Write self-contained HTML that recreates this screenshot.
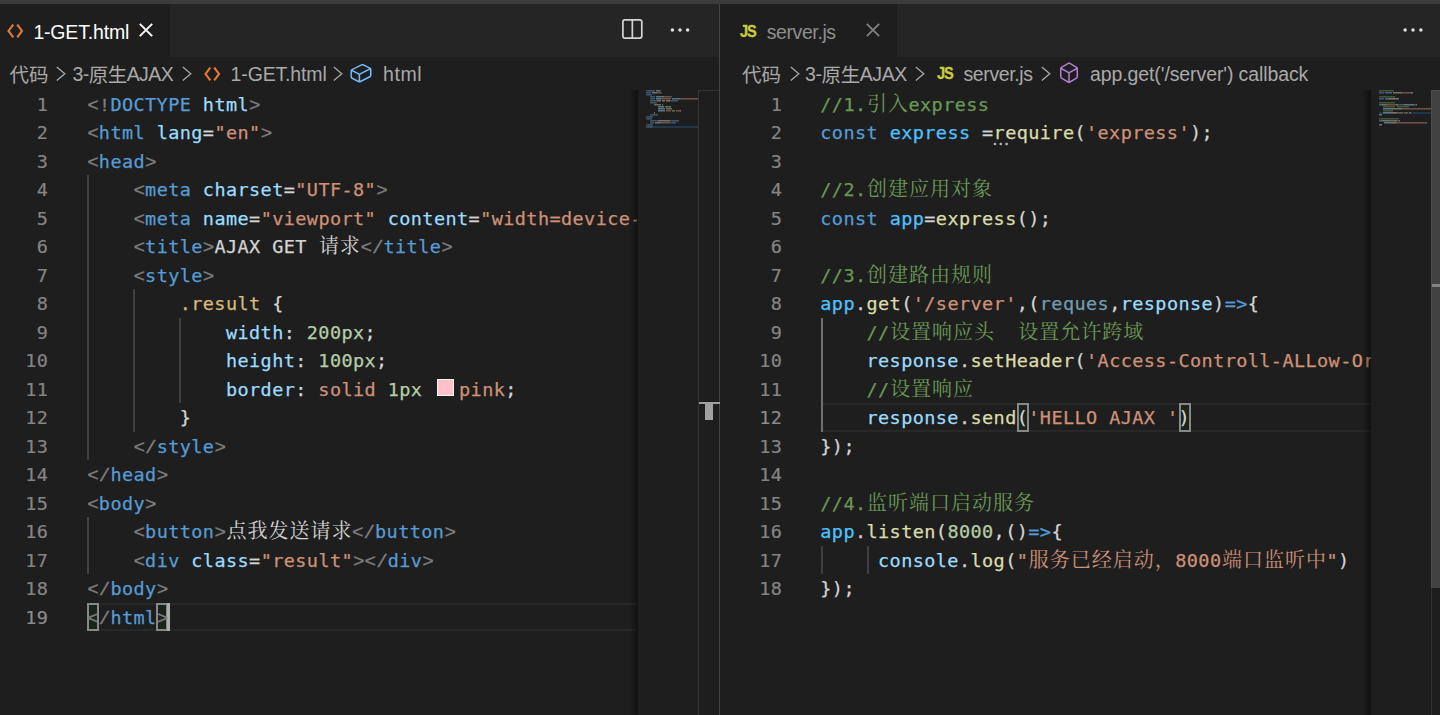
<!DOCTYPE html>
<html lang="zh"><head><meta charset="utf-8"><title>VS Code</title>
<style>
html,body{margin:0;padding:0;background:#1e1e1e}
body{width:1440px;height:715px;overflow:hidden;position:relative;font-family:"Liberation Sans","Noto Sans CJK SC",sans-serif;color:#ccc}
div,span,i,svg{position:absolute;box-sizing:border-box}
.ln span{position:static}
.bc span{position:relative;top:1px}
.strip{left:0;top:0;width:1440px;height:4px;background:#3c3c3c}
.tabs{top:4px;height:52.5px;background:#252526}
.tab{top:0;height:52.5px;background:#1e1e1e}
.lbl{font-size:19.5px;line-height:52.5px;top:0;white-space:pre;color:#fff}
.bc{font-size:19.5px;line-height:33px;top:58px;height:33px;white-space:pre;color:#a9a9a9}
.code{top:0;height:715px;overflow:hidden}
.ln{height:28.5px;line-height:28.5px;white-space:pre;font-family:"DejaVu Sans Mono","Liberation Mono","Noto Serif CJK SC",monospace;font-size:18.5px;letter-spacing:0.413px;color:#d4d4d4;-webkit-text-stroke:0.25px}
.ln .z{font-family:"Noto Serif CJK SC","Noto Sans CJK SC",serif;font-size:20px;line-height:20px;letter-spacing:1px;margin-left:0.5px;margin-right:-0.5px;-webkit-text-stroke:0}
.no{width:60px;height:28.5px;line-height:28.5px;text-align:right;font-family:"DejaVu Sans Mono","Liberation Mono",monospace;font-size:18.5px;letter-spacing:0.413px;color:#858585;-webkit-text-stroke:0.2px}
.no.a{color:#8c8c8c}
.g{color:#808080;font-family:"Liberation Mono","DejaVu Sans Mono",monospace;font-size:19.25px;letter-spacing:0;-webkit-text-stroke:0.3px}.b{color:#569cd6}.l{color:#9cdcfe}.w{color:#d4d4d4}.s{color:#ce9178}.y{color:#d7ba7d}
.n{color:#b5cea8}.c{color:#6a9955}.k{color:#4fc1ff}.f{color:#dcdcaa}.d{color:#729db3}
.gd{width:1.8px;background:#404040}
.gd.a{width:2.2px;background:#707070}
.sw{position:static;display:inline-block;width:16.8px;height:16.8px;margin:2.1px 5.2px 4.2px 3.2px;border:1.6px solid #f4f4f4;background:#ffc0cb;vertical-align:-4.5px}
.cl{height:28.5px;margin-top:0.4px;border-top:2.6px solid #282828;border-bottom:2.6px solid #282828}
.bm{height:28.2px;margin-top:0.4px;border:2px solid #888;background:rgba(0,100,0,0.1)}
.mm{shape-rendering:auto}
.shadow{width:9px;background:linear-gradient(to right,rgba(0,0,0,0),rgba(0,0,0,0.45))}

.js{font-family:"Liberation Sans",sans-serif;font-weight:bold;font-size:16.2px;line-height:18px;color:#cbcb41;letter-spacing:-1.2px;-webkit-text-stroke:0.35px #cbcb41;transform:scaleX(0.9);transform-origin:0 0}
</style></head>
<body>
<div class="strip"></div>
<div class="tabs" style="left:0;width:719px"><div class="tab" style="left:0;width:170px"></div></div>
<div class="tabs" style="left:720px;width:720px"><div class="tab" style="left:0;width:177px"></div></div>
<div style="left:719px;top:4px;width:1px;height:711px;background:#444"></div>
<svg style="left:6.5px;top:23.5px" width="17" height="14" viewBox="0 0 17 14"><path d="M6.3 0.5 L1.5 6.9 L6.3 13.3 M10.2 0.5 L15 6.9 L10.2 13.3" fill="none" stroke="#e37933" stroke-width="2.1"/></svg>
<div class="lbl" id="t1" style="left:33.4px;top:5.6px;letter-spacing:-0.18px">1-GET.html</div>
<svg style="left:139.4px;top:22.9px" width="14" height="14" viewBox="0 0 14 14"><path d="M0.8 0.8 L13.2 13.2 M13.2 0.8 L0.8 13.2" fill="none" stroke="#ffffff" stroke-width="1.9"/></svg>
<svg style="left:622px;top:19px" width="21" height="20" viewBox="0 0 21 20"><rect x="0.9" y="0.9" width="18.9" height="18.2" rx="2" fill="none" stroke="#d4d4d4" stroke-width="1.7"/><path d="M10.35 1 V19" stroke="#d4d4d4" stroke-width="1.7"/></svg>
<svg style="left:667.8px;top:27.1px" width="24" height="6" viewBox="0 0 24 6"><circle cx="4.4" cy="3" r="1.75" fill="#e0e0e0"/><circle cx="12" cy="3" r="1.75" fill="#e0e0e0"/><circle cx="19.6" cy="3" r="1.75" fill="#e0e0e0"/></svg>
<div class="js" style="left:740px;top:21.5px">JS</div>
<div class="lbl" id="t2" style="left:766.7px;top:5.6px;color:#8e8e8e;letter-spacing:-0.4px">server.js</div>
<svg style="left:866px;top:23px" width="14" height="14" viewBox="0 0 14 14"><path d="M0.8 0.8 L13.2 13.2 M13.2 0.8 L0.8 13.2" fill="none" stroke="#808080" stroke-width="1.9"/></svg>
<svg style="left:1401px;top:27.1px" width="24" height="6" viewBox="0 0 24 6"><circle cx="4.1" cy="3" r="1.75" fill="#e0e0e0"/><circle cx="12" cy="3" r="1.75" fill="#e0e0e0"/><circle cx="19.9" cy="3" r="1.75" fill="#e0e0e0"/></svg>
<div class="bc" id="b1" style="left:9.5px"><span>代码</span></div>
<svg style="left:55px;top:64.5px" width="12" height="17" viewBox="0 0 12 17"><path d="M1.8 2 L9.8 8.8 L1.8 15.6" fill="none" stroke="#a9a9a9" stroke-width="1.3"/></svg>
<div class="bc" id="b2" style="left:72.5px;letter-spacing:-0.55px">3-<span>原生</span>AJAX</div>
<svg style="left:181px;top:64.5px" width="12" height="17" viewBox="0 0 12 17"><path d="M1.8 2 L9.8 8.8 L1.8 15.6" fill="none" stroke="#a9a9a9" stroke-width="1.3"/></svg>
<svg style="left:204px;top:67.4px" width="17" height="14" viewBox="0 0 17 14"><path d="M6.3 0.5 L1.5 6.9 L6.3 13.3 M10.2 0.5 L15 6.9 L10.2 13.3" fill="none" stroke="#e37933" stroke-width="2.1"/></svg>
<div class="bc" id="b3" style="left:230.6px;letter-spacing:-0.15px">1-GET.html</div>
<svg style="left:332.4px;top:64.5px" width="12" height="17" viewBox="0 0 12 17"><path d="M1.8 2 L9.8 8.8 L1.8 15.6" fill="none" stroke="#a9a9a9" stroke-width="1.3"/></svg>
<svg style="left:348.6px;top:60.8px" width="24" height="24" viewBox="0 0 16 16"><path fill="#75beff" d="M14.45 4.5l-5-2.5h-.9l-7 3.5-.55.89v4.5l.55.9 5 2.5h.9l7-3.5.55-.9v-4.5l-.55-.89zm-8 8.64l-4.5-2.25v-4l4.5 2.25v4zm.5-4.87l-4.5-2.25 6.5-3.25 4.5 2.25-6.5 3.25zm7 1.62l-6.5 3.25v-4l6.5-3.25v4z"/></svg>
<div class="bc" id="b4" style="left:383px;letter-spacing:0.6px">html</div>
<div class="bc" id="b5" style="left:742px"><span>代码</span></div>
<svg style="left:788.5px;top:64.5px" width="12" height="17" viewBox="0 0 12 17"><path d="M1.8 2 L9.8 8.8 L1.8 15.6" fill="none" stroke="#a9a9a9" stroke-width="1.3"/></svg>
<div class="bc" id="b6" style="left:805px;letter-spacing:-0.4px">3-<span>原生</span>AJAX</div>
<svg style="left:913.5px;top:64.5px" width="12" height="17" viewBox="0 0 12 17"><path d="M1.8 2 L9.8 8.8 L1.8 15.6" fill="none" stroke="#a9a9a9" stroke-width="1.3"/></svg>
<div class="js" style="left:937px;top:63.5px">JS</div>
<div class="bc" id="b7" style="left:963.5px;letter-spacing:-0.4px">server.js</div>
<svg style="left:1039.5px;top:64.5px" width="12" height="17" viewBox="0 0 12 17"><path d="M1.8 2 L9.8 8.8 L1.8 15.6" fill="none" stroke="#a9a9a9" stroke-width="1.3"/></svg>
<svg style="left:1056.7px;top:60.6px" width="24" height="24" viewBox="0 0 16 16"><path fill="#b180d7" d="M13.51 4l-5-3h-1l-5 3-.49.86v6l.49.85 5 3h1l5-3 .49-.85v-6L13.51 4zm-6 9.56l-4.5-2.7V5.7l4.5 2.45v5.41zM3.27 4.7l4.74-2.84 4.74 2.84-4.74 2.59L3.27 4.7zm9.74 6.16l-4.5 2.7V8.15l4.5-2.45v5.16z"/></svg>
<div class="bc" id="b8" style="left:1090px;letter-spacing:-0.1px">app.get('/server') callback</div>
<div class="code" style="left:0;width:637px">
<div class="cl" style="left:87px;width:560px;top:602.5px"></div>
<div class="gd" style="left:87px;top:175.0px;height:285.0px"></div>
<div class="gd" style="left:87px;top:517.0px;height:57.0px"></div>
<div class="gd" style="left:133.2px;top:289.0px;height:142.5px"></div>
<div class="gd" style="left:179.4px;top:317.5px;height:85.5px"></div>
<div class="bm" style="left:86.8px;width:12.4px;top:602.5px"></div>
<div class="bm" style="left:156px;width:12.4px;top:602.5px"></div>
<div style="left:166.8px;width:3.2px;height:28.2px;top:602.9px;background:#aeafad"></div>
<div class="no" style="top:90.5px;left:-11.7px">1</div>
<div class="no" style="top:119.0px;left:-11.7px">2</div>
<div class="no" style="top:147.5px;left:-11.7px">3</div>
<div class="no" style="top:176.0px;left:-11.7px">4</div>
<div class="no" style="top:204.5px;left:-11.7px">5</div>
<div class="no" style="top:233.0px;left:-11.7px">6</div>
<div class="no" style="top:261.5px;left:-11.7px">7</div>
<div class="no" style="top:290.0px;left:-11.7px">8</div>
<div class="no" style="top:318.5px;left:-11.7px">9</div>
<div class="no" style="top:347.0px;left:-11.7px">10</div>
<div class="no" style="top:375.5px;left:-11.7px">11</div>
<div class="no" style="top:404.0px;left:-11.7px">12</div>
<div class="no" style="top:432.5px;left:-11.7px">13</div>
<div class="no" style="top:461.0px;left:-11.7px">14</div>
<div class="no" style="top:489.5px;left:-11.7px">15</div>
<div class="no" style="top:518.0px;left:-11.7px">16</div>
<div class="no" style="top:546.5px;left:-11.7px">17</div>
<div class="no" style="top:575.0px;left:-11.7px">18</div>
<div class="no a" style="top:603.5px;left:-11.7px">19</div>
<div class="ln" style="top:90.5px;left:87.3px"><span class="g">&lt;!</span><span class="b">DOCTYPE</span><span class="w"> </span><span class="l">html</span><span class="g">&gt;</span></div>
<div class="ln" style="top:119.0px;left:87.3px"><span class="g">&lt;</span><span class="b">html</span><span class="w"> </span><span class="l">lang</span><span class="w">=</span><span class="s">"en"</span><span class="g">&gt;</span></div>
<div class="ln" style="top:147.5px;left:87.3px"><span class="g">&lt;</span><span class="b">head</span><span class="g">&gt;</span></div>
<div class="ln" style="top:176.0px;left:87.3px"><span class="w">    </span><span class="g">&lt;</span><span class="b">meta</span><span class="w"> </span><span class="l">charset</span><span class="w">=</span><span class="s">"UTF-8"</span><span class="g">&gt;</span></div>
<div class="ln" style="top:204.5px;left:87.3px"><span class="w">    </span><span class="g">&lt;</span><span class="b">meta</span><span class="w"> </span><span class="l">name</span><span class="w">=</span><span class="s">"viewport"</span><span class="w"> </span><span class="l">content</span><span class="w">=</span><span class="s">"width=device-width, initial-scale=1.0"</span><span class="g">&gt;</span></div>
<div class="ln" style="top:233.0px;left:87.3px"><span class="w">    </span><span class="g">&lt;</span><span class="b">title</span><span class="g">&gt;</span><span class="w">AJAX GET <span class="z">请求</span></span><span class="g">&lt;/</span><span class="b">title</span><span class="g">&gt;</span></div>
<div class="ln" style="top:261.5px;left:87.3px"><span class="w">    </span><span class="g">&lt;</span><span class="b">style</span><span class="g">&gt;</span></div>
<div class="ln" style="top:290.0px;left:87.3px"><span class="w">        </span><span class="y">.result</span><span class="w"> {</span></div>
<div class="ln" style="top:318.5px;left:87.3px"><span class="w">            </span><span class="l">width</span><span class="w">: </span><span class="n">200px</span><span class="w">;</span></div>
<div class="ln" style="top:347.0px;left:87.3px"><span class="w">            </span><span class="l">height</span><span class="w">: </span><span class="n">100px</span><span class="w">;</span></div>
<div class="ln" style="top:375.5px;left:87.3px"><span class="w">            </span><span class="l">border</span><span class="w">: </span><span class="s">solid</span><span class="w"> </span><span class="n">1px</span><span class="w"> </span><i class="sw"></i><span class="s">pink</span><span class="w">;</span></div>
<div class="ln" style="top:404.0px;left:87.3px"><span class="w">        }</span></div>
<div class="ln" style="top:432.5px;left:87.3px"><span class="w">    </span><span class="g">&lt;/</span><span class="b">style</span><span class="g">&gt;</span></div>
<div class="ln" style="top:461.0px;left:87.3px"><span class="g">&lt;/</span><span class="b">head</span><span class="g">&gt;</span></div>
<div class="ln" style="top:489.5px;left:87.3px"><span class="g">&lt;</span><span class="b">body</span><span class="g">&gt;</span></div>
<div class="ln" style="top:518.0px;left:87.3px"><span class="w">    </span><span class="g">&lt;</span><span class="b">button</span><span class="g">&gt;</span><span class="w"><span class="z">点我发送请求</span></span><span class="g">&lt;/</span><span class="b">button</span><span class="g">&gt;</span></div>
<div class="ln" style="top:546.5px;left:87.3px"><span class="w">    </span><span class="g">&lt;</span><span class="b">div</span><span class="w"> </span><span class="l">class</span><span class="w">=</span><span class="s">"result"</span><span class="g">&gt;&lt;/</span><span class="b">div</span><span class="g">&gt;</span></div>
<div class="ln" style="top:575.0px;left:87.3px"><span class="g">&lt;/</span><span class="b">body</span><span class="g">&gt;</span></div>
<div class="ln" style="top:603.5px;left:87.3px"><span class="g">&lt;/</span><span class="b">html</span><span class="g">&gt;</span></div>
</div>
<div class="shadow" style="left:629px;top:89.5px;height:626px"></div>
<svg class="mm" style="left:638px;top:90.0px" width="60" height="60" viewBox="0 0 60 60"><g opacity="0.5"><rect x="8" y="36" width="52" height="2" fill="#264f78" opacity="1.6"/><rect x="8" y="0.1" width="2" height="1.4" fill="#808080"/><rect x="10" y="0.1" width="7" height="1.4" fill="#569cd6"/><rect x="18" y="0.1" width="4" height="1.4" fill="#9cdcfe"/><rect x="22" y="0.1" width="1" height="1.4" fill="#808080"/><rect x="8" y="2.1" width="1" height="1.4" fill="#808080"/><rect x="9" y="2.1" width="4" height="1.4" fill="#569cd6"/><rect x="14" y="2.1" width="4" height="1.4" fill="#9cdcfe"/><rect x="18" y="2.1" width="1" height="1.4" fill="#d4d4d4"/><rect x="19" y="2.1" width="4" height="1.4" fill="#ce9178"/><rect x="23" y="2.1" width="1" height="1.4" fill="#808080"/><rect x="8" y="4.1" width="1" height="1.4" fill="#808080"/><rect x="9" y="4.1" width="4" height="1.4" fill="#569cd6"/><rect x="13" y="4.1" width="1" height="1.4" fill="#808080"/><rect x="12" y="6.1" width="1" height="1.4" fill="#808080"/><rect x="13" y="6.1" width="4" height="1.4" fill="#569cd6"/><rect x="18" y="6.1" width="7" height="1.4" fill="#9cdcfe"/><rect x="25" y="6.1" width="1" height="1.4" fill="#d4d4d4"/><rect x="26" y="6.1" width="7" height="1.4" fill="#ce9178"/><rect x="33" y="6.1" width="1" height="1.4" fill="#808080"/><rect x="12" y="8.1" width="1" height="1.4" fill="#808080"/><rect x="13" y="8.1" width="4" height="1.4" fill="#569cd6"/><rect x="18" y="8.1" width="4" height="1.4" fill="#9cdcfe"/><rect x="22" y="8.1" width="1" height="1.4" fill="#d4d4d4"/><rect x="23" y="8.1" width="10" height="1.4" fill="#ce9178"/><rect x="34" y="8.1" width="7" height="1.4" fill="#9cdcfe"/><rect x="41" y="8.1" width="1" height="1.4" fill="#d4d4d4"/><rect x="42" y="8.1" width="18" height="1.4" fill="#ce9178"/><rect x="12" y="10.1" width="1" height="1.4" fill="#808080"/><rect x="13" y="10.1" width="5" height="1.4" fill="#569cd6"/><rect x="18" y="10.1" width="1" height="1.4" fill="#808080"/><rect x="19" y="10.1" width="4" height="1.4" fill="#d4d4d4"/><rect x="24" y="10.1" width="3" height="1.4" fill="#d4d4d4"/><rect x="28" y="10.1" width="4" height="1.4" fill="#d4d4d4"/><rect x="32" y="10.1" width="2" height="1.4" fill="#808080"/><rect x="34" y="10.1" width="5" height="1.4" fill="#569cd6"/><rect x="39" y="10.1" width="1" height="1.4" fill="#808080"/><rect x="12" y="12.1" width="1" height="1.4" fill="#808080"/><rect x="13" y="12.1" width="5" height="1.4" fill="#569cd6"/><rect x="18" y="12.1" width="1" height="1.4" fill="#808080"/><rect x="16" y="14.1" width="7" height="1.4" fill="#d7ba7d"/><rect x="24" y="14.1" width="1" height="1.4" fill="#d4d4d4"/><rect x="20" y="16.1" width="5" height="1.4" fill="#9cdcfe"/><rect x="25" y="16.1" width="1" height="1.4" fill="#d4d4d4"/><rect x="27" y="16.1" width="5" height="1.4" fill="#b5cea8"/><rect x="32" y="16.1" width="1" height="1.4" fill="#d4d4d4"/><rect x="20" y="18.1" width="6" height="1.4" fill="#9cdcfe"/><rect x="26" y="18.1" width="1" height="1.4" fill="#d4d4d4"/><rect x="28" y="18.1" width="5" height="1.4" fill="#b5cea8"/><rect x="33" y="18.1" width="1" height="1.4" fill="#d4d4d4"/><rect x="20" y="20.1" width="6" height="1.4" fill="#9cdcfe"/><rect x="26" y="20.1" width="1" height="1.4" fill="#d4d4d4"/><rect x="28" y="20.1" width="5" height="1.4" fill="#ce9178"/><rect x="34" y="20.1" width="3" height="1.4" fill="#b5cea8"/><rect x="38" y="20.1" width="4" height="1.4" fill="#ce9178"/><rect x="42" y="20.1" width="1" height="1.4" fill="#d4d4d4"/><rect x="16" y="22.1" width="1" height="1.4" fill="#d4d4d4"/><rect x="12" y="24.1" width="2" height="1.4" fill="#808080"/><rect x="14" y="24.1" width="5" height="1.4" fill="#569cd6"/><rect x="19" y="24.1" width="1" height="1.4" fill="#808080"/><rect x="8" y="26.1" width="2" height="1.4" fill="#808080"/><rect x="10" y="26.1" width="4" height="1.4" fill="#569cd6"/><rect x="14" y="26.1" width="1" height="1.4" fill="#808080"/><rect x="8" y="28.1" width="1" height="1.4" fill="#808080"/><rect x="9" y="28.1" width="4" height="1.4" fill="#569cd6"/><rect x="13" y="28.1" width="1" height="1.4" fill="#808080"/><rect x="12" y="30.1" width="1" height="1.4" fill="#808080"/><rect x="13" y="30.1" width="6" height="1.4" fill="#569cd6"/><rect x="19" y="30.1" width="1" height="1.4" fill="#808080"/><rect x="20" y="30.1" width="12" height="1.4" fill="#d4d4d4"/><rect x="32" y="30.1" width="2" height="1.4" fill="#808080"/><rect x="34" y="30.1" width="6" height="1.4" fill="#569cd6"/><rect x="40" y="30.1" width="1" height="1.4" fill="#808080"/><rect x="12" y="32.1" width="1" height="1.4" fill="#808080"/><rect x="13" y="32.1" width="3" height="1.4" fill="#569cd6"/><rect x="17" y="32.1" width="5" height="1.4" fill="#9cdcfe"/><rect x="22" y="32.1" width="1" height="1.4" fill="#d4d4d4"/><rect x="23" y="32.1" width="8" height="1.4" fill="#ce9178"/><rect x="31" y="32.1" width="3" height="1.4" fill="#808080"/><rect x="34" y="32.1" width="3" height="1.4" fill="#569cd6"/><rect x="37" y="32.1" width="1" height="1.4" fill="#808080"/><rect x="8" y="34.1" width="2" height="1.4" fill="#808080"/><rect x="10" y="34.1" width="4" height="1.4" fill="#569cd6"/><rect x="14" y="34.1" width="1" height="1.4" fill="#808080"/><rect x="8" y="36.1" width="2" height="1.4" fill="#808080"/><rect x="10" y="36.1" width="4" height="1.4" fill="#569cd6"/><rect x="14" y="36.1" width="1" height="1.4" fill="#808080"/></g></svg>
<div style="left:698px;top:89.5px;width:21px;height:626px;border-left:1px solid #333;border-top:1px solid #333"></div>
<div style="left:698.5px;top:401.5px;width:21px;height:2.5px;background:#a0a0a0"></div>
<div style="left:705px;top:403px;width:8px;height:17px;background:#a0a0a0"></div>
<div class="code" style="left:720px;width:651px">
<div class="cl" style="left:101px;width:560px;top:403.0px"></div>
<div class="gd a" style="left:100.8px;top:317.5px;height:114.0px"></div>
<div class="gd" style="left:100.8px;top:545.5px;height:28.5px"></div>
<div class="gd" style="left:147px;top:545.5px;height:28.5px"></div>
<div class="bm" style="left:296.8px;width:12.2px;top:403.0px"></div>
<div class="bm" style="left:458.6px;width:12.2px;top:403.0px"></div>
<div class="no" style="top:90.5px;left:2.3px">1</div>
<div class="no" style="top:119.0px;left:2.3px">2</div>
<div class="no" style="top:147.5px;left:2.3px">3</div>
<div class="no" style="top:176.0px;left:2.3px">4</div>
<div class="no" style="top:204.5px;left:2.3px">5</div>
<div class="no" style="top:233.0px;left:2.3px">6</div>
<div class="no" style="top:261.5px;left:2.3px">7</div>
<div class="no" style="top:290.0px;left:2.3px">8</div>
<div class="no" style="top:318.5px;left:2.3px">9</div>
<div class="no" style="top:347.0px;left:2.3px">10</div>
<div class="no" style="top:375.5px;left:2.3px">11</div>
<div class="no a" style="top:404.0px;left:2.3px">12</div>
<div class="no" style="top:432.5px;left:2.3px">13</div>
<div class="no" style="top:461.0px;left:2.3px">14</div>
<div class="no" style="top:489.5px;left:2.3px">15</div>
<div class="no" style="top:518.0px;left:2.3px">16</div>
<div class="no" style="top:546.5px;left:2.3px">17</div>
<div class="no" style="top:575.0px;left:2.3px">18</div>
<div class="ln" style="top:90.5px;left:100.3px"><span class="c">//1.<span class="z">引入</span>express</span></div>
<div class="ln" style="top:119.0px;left:100.3px"><span class="b">const</span><span class="w"> </span><span class="k">express</span><span class="w"> =</span><span class="f">require</span><span class="w">(</span><span class="s">'express'</span><span class="w">);</span></div>
<div class="ln" style="top:147.5px;left:100.3px"></div>
<div class="ln" style="top:176.0px;left:100.3px"><span class="c">//2.<span class="z">创建应用对象</span></span></div>
<div class="ln" style="top:204.5px;left:100.3px"><span class="b">const</span><span class="w"> </span><span class="k">app</span><span class="w">=</span><span class="f">express</span><span class="w">();</span></div>
<div class="ln" style="top:233.0px;left:100.3px"></div>
<div class="ln" style="top:261.5px;left:100.3px"><span class="c">//3.<span class="z">创建路由规则</span></span></div>
<div class="ln" style="top:290.0px;left:100.3px"><span class="k">app</span><span class="w">.</span><span class="f">get</span><span class="w">(</span><span class="s">'/server'</span><span class="w">,(</span><span class="d">reques</span><span class="w">,</span><span class="l">response</span><span class="w">)</span><span class="b">=&gt;</span><span class="w">{</span></div>
<div class="ln" style="top:318.5px;left:100.3px"><span class="w">    </span><span class="c">//<span class="z">设置响应头</span>  <span class="z">设置允许跨域</span></span></div>
<div class="ln" style="top:347.0px;left:100.3px"><span class="w">    </span><span class="l">response</span><span class="w">.</span><span class="f">setHeader</span><span class="w">(</span><span class="s">'Access-Controll-ALLow-Origin'</span><span class="w">,</span><span class="s">'*'</span><span class="w">);</span></div>
<div class="ln" style="top:375.5px;left:100.3px"><span class="w">    </span><span class="c">//<span class="z">设置响应</span></span></div>
<div class="ln" style="top:404.0px;left:100.3px"><span class="w">    </span><span class="l">response</span><span class="w">.</span><span class="f">send</span><span class="w">(</span><span class="s">'HELLO AJAX '</span><span class="w">)</span></div>
<div class="ln" style="top:432.5px;left:100.3px"><span class="w">});</span></div>
<div class="ln" style="top:461.0px;left:100.3px"></div>
<div class="ln" style="top:489.5px;left:100.3px"><span class="c">//4.<span class="z">监听端口启动服务</span></span></div>
<div class="ln" style="top:518.0px;left:100.3px"><span class="k">app</span><span class="w">.</span><span class="f">listen</span><span class="w">(</span><span class="n">8000</span><span class="w">,()</span><span class="b">=&gt;</span><span class="w">{</span></div>
<div class="ln" style="top:546.5px;left:100.3px"><span class="w">     </span><span class="l">console</span><span class="w">.</span><span class="f">log</span><span class="w">(</span><span class="s">"<span class="z">服务已经启动，</span>8000<span class="z">端口监听中</span>"</span><span class="w">)</span></div>
<div class="ln" style="top:575.0px;left:100.3px"><span class="w">});</span></div>
<svg style="left:273px;top:142px" width="16" height="4" viewBox="0 0 16 4"><circle cx="2" cy="2" r="1.35" fill="#b4b4b4"/><circle cx="7.8" cy="2" r="1.35" fill="#b4b4b4"/><circle cx="13.6" cy="2" r="1.35" fill="#b4b4b4"/></svg>
</div>
<div class="shadow" style="left:1362px;top:89.5px;height:626px"></div>
<svg class="mm" style="left:1371px;top:90.0px" width="60" height="60" viewBox="0 0 60 60"><g opacity="0.5"><rect x="8" y="22" width="52" height="2" fill="#264f78" opacity="1.6"/><rect x="8" y="0.1" width="15" height="1.4" fill="#6a9955"/><rect x="8" y="2.1" width="5" height="1.4" fill="#569cd6"/><rect x="14" y="2.1" width="7" height="1.4" fill="#4fc1ff"/><rect x="22" y="2.1" width="1" height="1.4" fill="#d4d4d4"/><rect x="23" y="2.1" width="7" height="1.4" fill="#dcdcaa"/><rect x="30" y="2.1" width="1" height="1.4" fill="#d4d4d4"/><rect x="31" y="2.1" width="9" height="1.4" fill="#ce9178"/><rect x="40" y="2.1" width="2" height="1.4" fill="#d4d4d4"/><rect x="8" y="6.1" width="16" height="1.4" fill="#6a9955"/><rect x="8" y="8.1" width="5" height="1.4" fill="#569cd6"/><rect x="14" y="8.1" width="3" height="1.4" fill="#4fc1ff"/><rect x="17" y="8.1" width="1" height="1.4" fill="#d4d4d4"/><rect x="18" y="8.1" width="7" height="1.4" fill="#dcdcaa"/><rect x="25" y="8.1" width="3" height="1.4" fill="#d4d4d4"/><rect x="8" y="12.1" width="16" height="1.4" fill="#6a9955"/><rect x="8" y="14.1" width="3" height="1.4" fill="#4fc1ff"/><rect x="11" y="14.1" width="1" height="1.4" fill="#d4d4d4"/><rect x="12" y="14.1" width="3" height="1.4" fill="#dcdcaa"/><rect x="15" y="14.1" width="1" height="1.4" fill="#d4d4d4"/><rect x="16" y="14.1" width="9" height="1.4" fill="#ce9178"/><rect x="25" y="14.1" width="2" height="1.4" fill="#d4d4d4"/><rect x="27" y="14.1" width="6" height="1.4" fill="#729db3"/><rect x="33" y="14.1" width="1" height="1.4" fill="#d4d4d4"/><rect x="34" y="14.1" width="8" height="1.4" fill="#9cdcfe"/><rect x="42" y="14.1" width="1" height="1.4" fill="#d4d4d4"/><rect x="43" y="14.1" width="2" height="1.4" fill="#569cd6"/><rect x="45" y="14.1" width="1" height="1.4" fill="#d4d4d4"/><rect x="12" y="16.1" width="12" height="1.4" fill="#6a9955"/><rect x="26" y="16.1" width="12" height="1.4" fill="#6a9955"/><rect x="12" y="18.1" width="8" height="1.4" fill="#9cdcfe"/><rect x="20" y="18.1" width="1" height="1.4" fill="#d4d4d4"/><rect x="21" y="18.1" width="9" height="1.4" fill="#dcdcaa"/><rect x="30" y="18.1" width="1" height="1.4" fill="#d4d4d4"/><rect x="31" y="18.1" width="29" height="1.4" fill="#ce9178"/><rect x="12" y="20.1" width="10" height="1.4" fill="#6a9955"/><rect x="12" y="22.1" width="8" height="1.4" fill="#9cdcfe"/><rect x="20" y="22.1" width="1" height="1.4" fill="#d4d4d4"/><rect x="21" y="22.1" width="4" height="1.4" fill="#dcdcaa"/><rect x="25" y="22.1" width="1" height="1.4" fill="#d4d4d4"/><rect x="26" y="22.1" width="6" height="1.4" fill="#ce9178"/><rect x="33" y="22.1" width="4" height="1.4" fill="#ce9178"/><rect x="38" y="22.1" width="1" height="1.4" fill="#ce9178"/><rect x="39" y="22.1" width="1" height="1.4" fill="#d4d4d4"/><rect x="8" y="24.1" width="3" height="1.4" fill="#d4d4d4"/><rect x="8" y="28.1" width="20" height="1.4" fill="#6a9955"/><rect x="8" y="30.1" width="3" height="1.4" fill="#4fc1ff"/><rect x="11" y="30.1" width="1" height="1.4" fill="#d4d4d4"/><rect x="12" y="30.1" width="6" height="1.4" fill="#dcdcaa"/><rect x="18" y="30.1" width="1" height="1.4" fill="#d4d4d4"/><rect x="19" y="30.1" width="4" height="1.4" fill="#b5cea8"/><rect x="23" y="30.1" width="3" height="1.4" fill="#d4d4d4"/><rect x="26" y="30.1" width="2" height="1.4" fill="#569cd6"/><rect x="28" y="30.1" width="1" height="1.4" fill="#d4d4d4"/><rect x="13" y="32.1" width="7" height="1.4" fill="#9cdcfe"/><rect x="20" y="32.1" width="1" height="1.4" fill="#d4d4d4"/><rect x="21" y="32.1" width="3" height="1.4" fill="#dcdcaa"/><rect x="24" y="32.1" width="1" height="1.4" fill="#d4d4d4"/><rect x="25" y="32.1" width="30" height="1.4" fill="#ce9178"/><rect x="55" y="32.1" width="1" height="1.4" fill="#d4d4d4"/><rect x="8" y="34.1" width="3" height="1.4" fill="#d4d4d4"/></g></svg>
<div style="left:1431px;top:89.5px;width:9px;height:626px;border-left:1px solid #303030"></div>
<div style="left:1431px;top:89.5px;width:9px;height:498px;background:#424242;border-left:1px solid #4c4c4c;border-top:1px solid #4c4c4c"></div>
<div style="left:1432px;top:283.5px;width:8px;height:3.5px;background:#858585"></div>
</body></html>
